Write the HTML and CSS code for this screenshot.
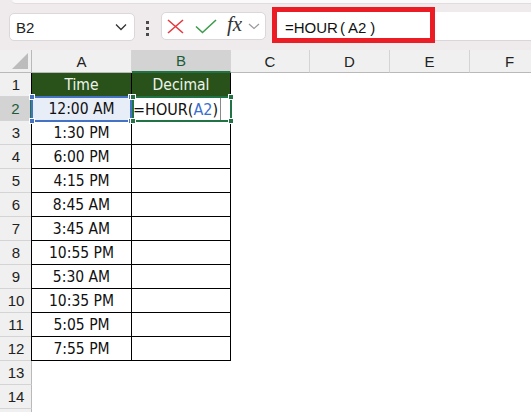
FILE: index.html
```html
<!DOCTYPE html>
<html>
<head>
<meta charset="utf-8">
<link rel="stylesheet" href="styles.css">
</head>
<body>
<div class="app">
  <div class="top">
    <div class="ribbon"></div>
    <div class="fbar">
      <div class="namebox">
        <span class="nbtext">B2</span>
        <svg class="nbchev" width="12" height="8" viewBox="0 0 12 8"><path d="M1 1.5 L6 6.5 L11 1.5" fill="none" stroke="#333" stroke-width="1.3"/></svg>
      </div>
      <div class="dots"><i></i><i></i><i></i></div>
      <div class="fxbox">
        <svg class="ix" width="17" height="15" viewBox="0 0 17 15"><path d="M1 1 L16 14 M16 1 L1 14" fill="none" stroke="#e5393e" stroke-width="1.6"/></svg>
        <svg class="ick" width="22" height="15" viewBox="0 0 22 15"><path d="M1 7.5 L7.5 13.5 L21 1" fill="none" stroke="#3b9d4c" stroke-width="1.6"/></svg>
        <span class="fx">fx</span>
        <svg class="fxchev" width="12" height="7" viewBox="0 0 12 7"><path d="M1 1 L6 5.5 L11 1" fill="none" stroke="#9a9a9a" stroke-width="1.2"/></svg>
      </div>
      <div class="formula">
        <span class="ftext">=HOUR<span class="p">(</span>A2<span class="p pr">)</span></span>
        <div class="redbox"></div>
      </div>
    </div>
  </div>

  <div class="grid">
    <div class="corner"><svg width="16" height="16" viewBox="0 0 16 16"><path d="M16 0 L16 16 L0 16 Z" fill="#bcbcbc"/></svg></div>
    <div class="ch">A</div><div class="ch sel">B</div><div class="ch">C</div><div class="ch">D</div><div class="ch">E</div><div class="ch">F</div>

    <div class="rh">1</div><div class="d a hd">Time</div><div class="d hd">Decimal</div><div class="e"></div><div class="e"></div><div class="e"></div><div class="e"></div>

    <div class="rh sel">2</div>
    <div class="d a refcell">12:00 AM<div class="ref"><i class="k tl"></i><i class="k tr"></i><i class="k bl"></i><i class="k br"></i></div></div>
    <div class="d act"><span class="edit">=HOUR(<span class="blue">A2</span>)</span><span class="caret"></span><div class="actbox"><i class="k g tl"></i><i class="k g tr"></i><i class="k g bl"></i><i class="k g br"></i></div></div>
    <div class="e"></div><div class="e"></div><div class="e"></div><div class="e"></div>

    <div class="rh">3</div><div class="d a">1:30 PM</div><div class="d"></div><div class="e"></div><div class="e"></div><div class="e"></div><div class="e"></div>
    <div class="rh">4</div><div class="d a">6:00 PM</div><div class="d"></div><div class="e"></div><div class="e"></div><div class="e"></div><div class="e"></div>
    <div class="rh">5</div><div class="d a">4:15 PM</div><div class="d"></div><div class="e"></div><div class="e"></div><div class="e"></div><div class="e"></div>
    <div class="rh">6</div><div class="d a">8:45 AM</div><div class="d"></div><div class="e"></div><div class="e"></div><div class="e"></div><div class="e"></div>
    <div class="rh">7</div><div class="d a">3:45 AM</div><div class="d"></div><div class="e"></div><div class="e"></div><div class="e"></div><div class="e"></div>
    <div class="rh">8</div><div class="d a">10:55 PM</div><div class="d"></div><div class="e"></div><div class="e"></div><div class="e"></div><div class="e"></div>
    <div class="rh">9</div><div class="d a">5:30 AM</div><div class="d"></div><div class="e"></div><div class="e"></div><div class="e"></div><div class="e"></div>
    <div class="rh">10</div><div class="d a">10:35 PM</div><div class="d"></div><div class="e"></div><div class="e"></div><div class="e"></div><div class="e"></div>
    <div class="rh">11</div><div class="d a">5:05 PM</div><div class="d"></div><div class="e"></div><div class="e"></div><div class="e"></div><div class="e"></div>
    <div class="rh">12</div><div class="d a">7:55 PM</div><div class="d"></div><div class="e"></div><div class="e"></div><div class="e"></div><div class="e"></div>

    <div class="rh">13</div><div class="e"></div><div class="e"></div><div class="e"></div><div class="e"></div><div class="e"></div><div class="e"></div>
    <div class="rh">14</div><div class="e"></div><div class="e"></div><div class="e"></div><div class="e"></div><div class="e"></div><div class="e"></div>
    <div class="rh"></div><div class="e"></div><div class="e"></div><div class="e"></div><div class="e"></div><div class="e"></div><div class="e"></div>
  </div>
</div>
</body>
</html>
```

FILE: styles.css
```css
html, body {
  margin: 0;
  padding: 0;
  background: #ffffff;
}
body {
  width: 531px;
  height: 412px;
  overflow: hidden;
  font-family: "Liberation Sans", Arial, sans-serif;
  color: #222;
}
.app {
  width: 531px;
  height: 412px;
  overflow: hidden;
}
.top {
  height: 50px;
  background: #efeaeb;
  box-sizing: border-box;
}
.ribbon {
  height: 3px;
  margin-left: 12px;
  background: #fbfafa;
  border-bottom: 1px solid #e2dcde;
  border-bottom-left-radius: 4px;
}
.fbar {
  display: flex;
  align-items: flex-start;
  padding-top: 8px;
  padding-left: 9px;
}
.namebox {
  box-sizing: border-box;
  width: 126px;
  height: 28px;
  margin-top: 1px;
  background: #fff;
  border: 1px solid #dcd7d8;
  border-radius: 5px;
  display: flex;
  align-items: center;
  justify-content: space-between;
  padding: 0 7px 0 6px;
}
.nbtext {
  font-size: 15px;
  color: #222;
}
.nbchev {
  display: block;
}
.dots {
  margin-left: 11px;
  margin-top: 9px;
  display: flex;
  flex-direction: column;
  gap: 3px;
}
.dots i {
  display: block;
  width: 3px;
  height: 3px;
  background: #4a4a4a;
}
.fxbox {
  box-sizing: border-box;
  width: 105px;
  height: 28px;
  margin-left: 12px;
  background: #fff;
  border: 1px solid #dcd7d8;
  border-radius: 5px;
  display: flex;
  align-items: center;
}
.ix {
  display: block;
  margin-left: 5px;
}
.ick {
  display: block;
  margin-left: 11px;
}
.fx {
  margin-left: 10px;
  font-family: "Liberation Serif", "Times New Roman", serif;
  font-style: italic;
  font-size: 21px;
  color: #333;
  line-height: 1;
  margin-top: -3px;
}
.fxchev {
  display: block;
  margin-left: 6px;
  margin-top: 1px;
}
.formula {
  position: relative;
  flex: 1;
  height: 29px;
  margin-left: 7px;
  background: #fff;
  box-sizing: border-box;
  border-bottom: 1px solid #dad5d6;
  display: flex;
  align-items: center;
  padding-left: 12px;
  padding-top: 2px;
}
.ftext {
  font-size: 15px;
  color: #111;
}
.p {
  margin: 0 3px 0 2px;
}
.pr {
  margin: 0 0 0 4px;
}
.redbox {
  position: absolute;
  left: -1px;
  top: -5px;
  width: 163px;
  height: 36px;
  box-sizing: border-box;
  border: 5px solid #ec1c24;
}

/* grid */
.grid {
  display: grid;
  grid-template-columns: 32px 100px 99px 79px 80px 80px 80px;
  grid-template-rows: 23px repeat(15, 24px);
  width: 550px;
}
.grid > div {
  box-sizing: border-box;
  display: flex;
  align-items: center;
}
.corner {
  background: #f0f0f0;
  border-right: 1px solid #b9b9b9;
  border-bottom: 1px solid #b9b9b9;
  justify-content: flex-end;
  align-items: flex-end !important;
  padding: 0 3px 3px 0;
}
.corner svg {
  display: block;
}
.ch {
  background: #f0f0f0;
  border-right: 1px solid #d4d4d4;
  border-bottom: 1px solid #b9b9b9;
  justify-content: center;
  font-size: 15px;
  color: #222;
}
.ch.sel {
  background: #d3d3d3;
  border-bottom: 2px solid #217346;
  color: #1d5c3a;
}
.rh {
  background: #f0f0f0;
  border-right: 1px solid #b9b9b9;
  border-bottom: 1px solid #d4d4d4;
  justify-content: center;
  font-size: 15px;
  color: #222;
  padding-left: 1px;
}
.rh.sel {
  background: #d3d3d3;
  border-right: 2px solid #217346;
  color: #1d5c3a;
}
.d {
  border-right: 1px solid #000;
  border-bottom: 1px solid #000;
  justify-content: center;
  font-family: "DejaVu Sans Condensed", "Liberation Sans", sans-serif;
  font-size: 15.5px;
  color: #111;
  padding-top: 1px;
}
.d.a {
  box-shadow: -1px 0 0 #000;
}
.hd {
  background: #29521b;
  color: #eef2ec;
}
.refcell {
  position: relative;
  background: #e8eef8;
}
.ref {
  position: absolute;
  left: -1px;
  top: -1px;
  width: 101px;
  height: 26px;
  box-sizing: border-box;
  border: 2px solid #4472c4;
}
.act {
  position: relative;
  justify-content: flex-start !important;
  padding-left: 1px;
}
.edit {
  font-size: 16px;
  color: #111;
}
.blue {
  color: #3b6fcf;
}
.caret {
  display: block;
  width: 1px;
  height: 22px;
  background: #8a8a8a;
  margin-left: 2px;
}
.actbox {
  position: absolute;
  left: 0;
  top: -1px;
  width: 100px;
  height: 26px;
  box-sizing: border-box;
  border: 2px solid #217346;
}
.k {
  position: absolute;
  width: 6px;
  height: 6px;
  box-sizing: border-box;
  background: #4472c4;
  border: 1px solid #fff;
}
.k.g {
  background: #217346;
}
.tl { left: -4px; top: -4px; }
.tr { right: -4px; top: -4px; }
.bl { left: -4px; bottom: -4px; }
.br { right: -4px; bottom: -4px; }
.e {
  background: #fff;
}
```
